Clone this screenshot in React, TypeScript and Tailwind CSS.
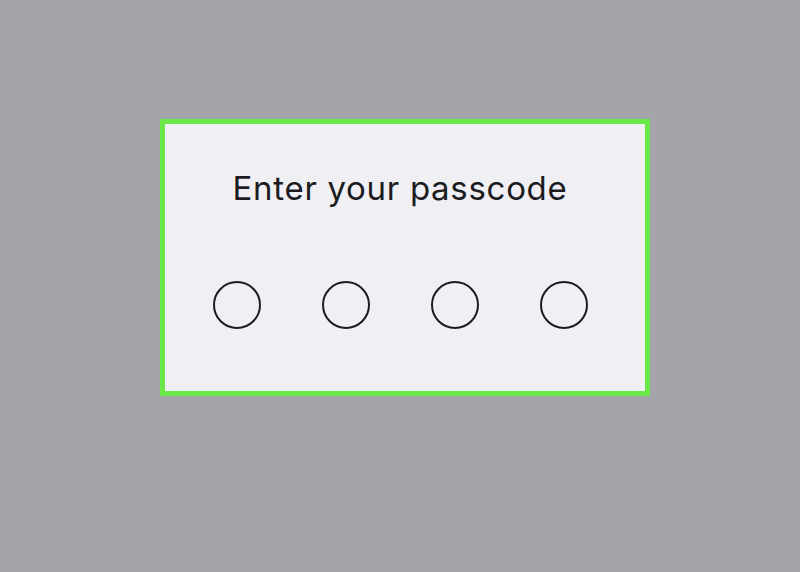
export default function App() {
  const dots = [0, 1, 2, 3];
  return (
    <div className="w-[800px] h-[572px] bg-[#a5a4a9] pt-[119px] pl-[160px]">
      <div className="w-[490px] h-[277px] border-[5px] border-[#69e84a] bg-[#efeff4] flex flex-col items-center pt-[44px] pr-[10px]">
        <p className="text-[33px] leading-[40px] text-[#1c1c1e] font-['Inter',sans-serif] tracking-[0.7px]">
          Enter your passcode
        </p>
        <div className="mt-[73px] flex gap-[61px]">
          {dots.map((d) => (
            <div key={d} className="w-[48px] h-[48px] rounded-full border-[2.5px] border-[#1c1c1e]" />
          ))}
        </div>
      </div>
    </div>
  );
}
